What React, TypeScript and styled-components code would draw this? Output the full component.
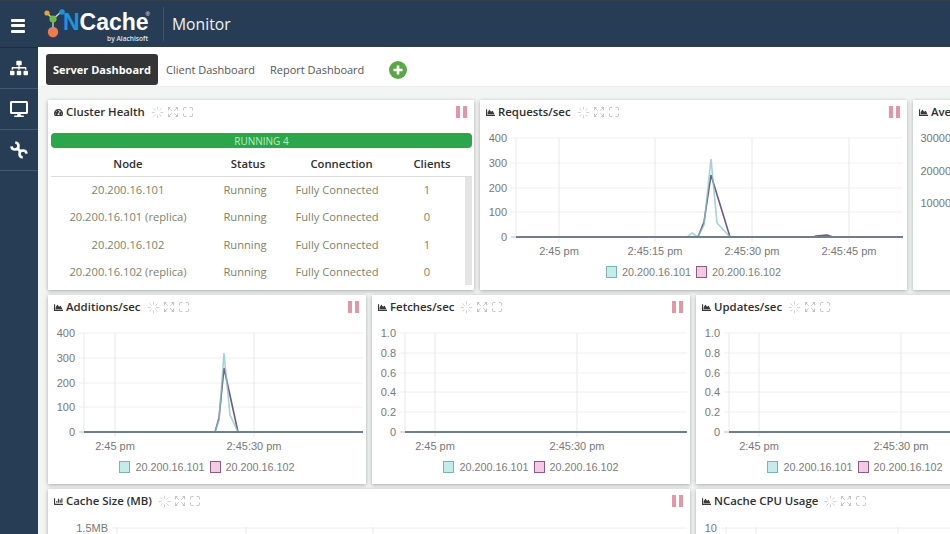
import type { ReactNode } from "react";
import styled, { createGlobalStyle } from "styled-components";
import { FaChartArea, FaChartBar, FaDesktop, FaSitemap, FaTachometerAlt } from "react-icons/fa";
import { Expand, Loader, Maximize } from "lucide-react";

const GlobalStyle = createGlobalStyle`
  html, body {
    margin: 0;
    height: 100%;
    overflow: hidden;
    background: #f3f4f4;
    font-family: "Open Sans", "Noto Sans", sans-serif;
  }
`;

const Page = styled.div`
  width: 950px;
  height: 534px;
  overflow: hidden;
  display: flex;
  flex-direction: column;
`;

const Header = styled.header`
  height: 47px;
  box-sizing: border-box;
  flex-shrink: 0;
  display: flex;
  align-items: center;
  background: #273d55;
  border-top: 1px solid #363d46;
  color: #fff;
`;

const Burger = styled.div`
  width: 38px;
  box-sizing: border-box;
  padding-right: 2px;
  display: flex;
  flex-direction: column;
  align-items: center;
  gap: 2.5px;
  margin-top: 3px;
`;

const BurgerBar = styled.span`
  width: 14px;
  height: 3px;
  border-radius: 1px;
  background: #fff;
`;

const LogoIcon = styled.svg`
  width: 24px;
  height: 34px;
  margin-left: 6px;
  margin-right: -7px;
  flex-shrink: 0;
`;

const LogoText = styled.div`
  display: flex;
  flex-direction: column;
  align-items: flex-end;
  width: 87px;
  margin-top: 5px;
`;

const LogoWord = styled.div`
  font-family: "Liberation Sans", Arial, sans-serif;
  font-size: 23px;
  line-height: 25px;
  font-weight: 700;
  white-space: nowrap;
  span {
    color: #1c95dc;
  }
  sup {
    font-size: 6px;
    line-height: 0;
    font-weight: 400;
    vertical-align: 14px;
    margin-left: -3px;
    margin-right: -2px;
  }
`;

const LogoBy = styled.div`
  font-size: 6.6px;
  line-height: 8px;
  font-weight: 600;
  color: #dfe6ec;
  white-space: nowrap;
`;

const HeaderDivider = styled.div`
  width: 1px;
  height: 34px;
  margin-left: 15px;
  background: #41566c;
`;

const AppTitle = styled.div`
  margin-left: 8px;
  font-size: 15.7px;
  color: #f0f3f5;
`;

const Body = styled.div`
  flex: 1;
  display: flex;
  min-height: 0;
`;

const Sidebar = styled.nav`
  width: 38px;
  flex-shrink: 0;
  background: #273d55;
  border-top: 1px solid #1c2e42;
`;

const SideItem = styled.div`
  height: 40px;
  display: flex;
  align-items: center;
  justify-content: center;
  color: #fff;
  border-bottom: 1px solid #45596e;
`;

const Main = styled.main`
  flex: 1;
  min-width: 0;
  overflow: hidden;
`;

const TabBar = styled.div`
  height: 40px;
  display: flex;
  align-items: center;
  gap: 1px;
  padding: 6px 0 0 8px;
  background: #fff;
  box-sizing: border-box;
  border-bottom: 1px solid #efefef;
`;

const Tab = styled.div<{ $active?: boolean }>`
  height: 31px;
  display: flex;
  align-items: center;
  padding: 0 7px;
  border-radius: 3px;
  font-size: 11px;
  font-weight: ${(p) => (p.$active ? 700 : 400)};
  color: ${(p) => (p.$active ? "#fff" : "#555")};
  background: ${(p) => (p.$active ? "#333537" : "transparent")};
  white-space: nowrap;
`;

const AddTab = styled.svg`
  width: 18px;
  height: 18px;
  margin-left: 17px;
`;

const Rows = styled.div`
  display: flex;
  flex-direction: column;
  gap: 5px;
  padding: 13px 0 0 10px;
`;

const Row = styled.div`
  display: flex;
  gap: 6px;
`;

const PanelBox = styled.section<{ $width: number; $height: number }>`
  width: ${(p) => p.$width}px;
  height: ${(p) => p.$height}px;
  flex-shrink: 0;
  background: #fff;
  box-shadow: 0 1px 4px rgba(0, 0, 0, 0.32);
`;

const PanelHead = styled.div`
  height: 24px;
  display: flex;
  align-items: center;
  padding: 0 7px 0 6px;
  color: #3a3a3a;
`;

const PanelTitle = styled.h3`
  margin: 0 6px 0 3px;
  font-size: 11.4px;
  line-height: 14px;
  font-weight: 600;
  color: #2e2e2e;
  white-space: nowrap;
`;

const Tools = styled.div`
  display: flex;
  align-items: center;
  gap: 3px;
  color: #a9a9a9;
`;

const Pause = styled.div`
  margin-left: auto;
  display: flex;
  gap: 3px;
  span {
    width: 4px;
    height: 12px;
    background: #e296a6;
  }
`;

const ChartSvg = styled.svg`
  display: block;
  margin-top: 6px;
  font-family: "Liberation Sans", Arial, sans-serif;
  font-size: 11px;
`;

const Legend = styled.div`
  height: 24px;
  display: flex;
  align-items: center;
  justify-content: center;
  gap: 5px;
  font-family: "Liberation Sans", Arial, sans-serif;
  font-size: 10.8px;
  color: #7b7b7b;
`;

const LegendItem = styled.div`
  display: flex;
  align-items: center;
  gap: 5px;
`;

const Swatch = styled.i<{ $pink?: boolean }>`
  width: 9px;
  height: 10px;
  border: 1px solid ${(p) => (p.$pink ? "#8c5a86" : "#78b4b6")};
  background: ${(p) => (p.$pink ? "#f6c8e4" : "#c4ecea")};
`;

const HealthBar = styled.div`
  margin: 9px 2px 0 3px;
  height: 15px;
  border-radius: 4px;
  display: flex;
  align-items: center;
  justify-content: center;
  background: #29a74a;
  color: #b8eec0;
  font-size: 10px;
`;

const NodeTable = styled.div`
  margin: 0 2px 0 3px;
`;

const NodeHead = styled.div`
  display: grid;
  grid-template-columns: 154px 86px 101px 1fr;
  height: 29px;
  box-sizing: border-box;
  padding-top: 2px;
  align-items: center;
  text-align: center;
  font-size: 11.3px;
  font-weight: 600;
  color: #2e2e2e;
  border-bottom: 1px solid #dcdcdc;
`;

const NodeBody = styled.div`
  display: flex;
  justify-content: space-between;
`;

const NodeRows = styled.div`
  flex: 1;
  margin-top: -1px;
`;

const NodeRow = styled.div`
  display: grid;
  grid-template-columns: 154px 80px 104px 1fr;
  height: 27.3px;
  align-items: center;
  text-align: center;
  font-size: 11.2px;
  color: #7c8468;
`;

const Scrollbar = styled.div`
  width: 7px;
  height: 108px;
  background: #e4e4e4;
`;

const PanelTools = () => (
  <Tools>
    <Loader size={13} strokeWidth={1.4} color="#c4c4c4" />
    <Expand size={12} strokeWidth={1.4} strokeDasharray="3 2" />
    <Maximize size={12} strokeWidth={1.4} />
  </Tools>
);

interface PanelProps {
  title: string;
  icon?: "area" | "bar" | "gauge";
  width: number;
  height: number;
  paused?: boolean;
  children?: ReactNode;
}

const Panel = ({ title, icon = "area", width, height, paused = true, children }: PanelProps) => {
  const Icon = icon === "bar" ? FaChartBar : icon === "gauge" ? FaTachometerAlt : FaChartArea;
  return (
    <PanelBox $width={width} $height={height}>
      <PanelHead>
        <Icon size={9} />
        <PanelTitle>{title}</PanelTitle>
        <PanelTools />
        {paused && (
          <Pause>
            <span />
            <span />
          </Pause>
        )}
      </PanelHead>
      {children}
    </PanelBox>
  );
};

interface ChartProps {
  width: number;
  height?: number;
  left: number;
  right: number;
  top?: number;
  bottom?: number;
  yTicks: [string, number][];
  xTicks: [string, number][];
  teal?: string;
  purple?: string;
  baseline?: boolean;
}

// coordinates here are local to the svg, read off the screenshot
const Chart = ({
  width,
  height = 130,
  left,
  right,
  top = 8,
  bottom = 107,
  yTicks,
  xTicks,
  teal,
  purple,
  baseline = true,
}: ChartProps) => (
  <ChartSvg width={width} height={height} viewBox={`0 0 ${width} ${height}`}>
    {yTicks.map(([label, y]) => (
      <g key={label}>
        <line x1={left - 5} x2={right} y1={y} y2={y} stroke={y === bottom ? "#bbb" : "#eeeeee"} />
        <text x={left - 9} y={y + 4} textAnchor="end" fill="#777">
          {label}
        </text>
      </g>
    ))}
    <line x1={left} x2={left} y1={top} y2={bottom} stroke="#e8e8e8" />
    {xTicks.map(([label, x]) => (
      <g key={x}>
        <line x1={x} x2={x} y1={top} y2={bottom + 5} stroke="#e8e8e8" />
        <text x={x} y={bottom + 18} textAnchor="middle" fill="#777">
          {label}
        </text>
      </g>
    ))}
    {purple && <polyline points={purple} fill="none" stroke="#6e5a82" strokeWidth="1.6" />}
    {teal && <polyline points={teal} fill="none" stroke="rgba(132,196,200,0.75)" strokeWidth="1.6" />}
    {baseline && <line x1={left} x2={right} y1={bottom} y2={bottom} stroke="#6f7d8e" strokeWidth="1.8" />}
  </ChartSvg>
);

const ChartLegend = () => (
  <Legend>
    <LegendItem>
      <Swatch />
      20.200.16.101
    </LegendItem>
    <LegendItem>
      <Swatch $pink />
      20.200.16.102
    </LegendItem>
  </Legend>
);

const nodes = [
  ["20.200.16.101", "1"],
  ["20.200.16.101 (replica)", "0"],
  ["20.200.16.102", "1"],
  ["20.200.16.102 (replica)", "0"],
];

const hundreds: [string, number][] = [
  ["400", 8],
  ["300", 33],
  ["200", 58],
  ["100", 82],
  ["0", 107],
];

const fractions: [string, number][] = [
  ["1.0", 8],
  ["0.8", 28],
  ["0.6", 48],
  ["0.4", 67],
  ["0.2", 87],
  ["0", 107],
];

const App = () => (
  <Page>
    <GlobalStyle />
    <Header>
      <Burger>
        <BurgerBar />
        <BurgerBar />
        <BurgerBar />
      </Burger>
      <LogoIcon viewBox="0 0 24 34">
        <path d="M3 6 L9 12 L17 5 M9 12 L9 24" stroke="#cfd8de" strokeWidth="1.3" fill="none" />
        <circle cx="3" cy="6" r="2.6" fill="#e8a33c" />
        <circle cx="18" cy="5" r="2.8" fill="#1c95dc" />
        <circle cx="9" cy="12" r="3.6" fill="#6cbb45" />
        <circle cx="9" cy="25" r="5.2" fill="#ee7a50" />
      </LogoIcon>
      <LogoText>
        <LogoWord>
          <span>N</span>Cache<sup>®</sup>
        </LogoWord>
        <LogoBy>by Alachisoft</LogoBy>
      </LogoText>
      <HeaderDivider />
      <AppTitle>Monitor</AppTitle>
    </Header>
    <Body>
      <Sidebar>
        <SideItem>
          <FaSitemap size={18} />
        </SideItem>
        <SideItem>
          <FaDesktop size={18} />
        </SideItem>
        <SideItem>
          <svg width="20" height="20" viewBox="0 0 20 20" fill="none" stroke="#fff" strokeWidth="2.6">
            <path d="M6.3 2.5 A3.5 3.5 0 1 1 2.5 6.3" />
            <path d="M13.7 17.5 A3.5 3.5 0 1 1 17.5 13.7" />
            <path d="M8 8 L12 12" strokeWidth="3" />
          </svg>
        </SideItem>
      </Sidebar>
      <Main>
        <TabBar>
          <Tab $active>Server Dashboard</Tab>
          <Tab>Client Dashboard</Tab>
          <Tab>Report Dashboard</Tab>
          <AddTab viewBox="0 0 18 18">
            <circle cx="9" cy="9" r="9" fill="#5aa845" />
            <path d="M9 4.5 V13.5 M4.5 9 H13.5" stroke="#fff" strokeWidth="2.6" />
          </AddTab>
        </TabBar>
        <Rows>
          <Row>
            <Panel title="Cluster Health" icon="gauge" width={426} height={190}>
              <HealthBar>RUNNING 4</HealthBar>
              <NodeTable>
                <NodeHead>
                  <div>Node</div>
                  <div>Status</div>
                  <div>Connection</div>
                  <div>Clients</div>
                </NodeHead>
                <NodeBody>
                  <NodeRows>
                    {nodes.map(([name, clients]) => (
                      <NodeRow key={name}>
                        <div>{name}</div>
                        <div>Running</div>
                        <div>Fully Connected</div>
                        <div>{clients}</div>
                      </NodeRow>
                    ))}
                  </NodeRows>
                  <Scrollbar />
                </NodeBody>
              </NodeTable>
            </Panel>
            <Panel title="Requests/sec" width={427} height={190}>
              <Chart
                width={427}
                left={36}
                right={423}
                yTicks={hundreds}
                xTicks={[
                  ["2:45 pm", 79],
                  ["2:45:15 pm", 175],
                  ["2:45:30 pm", 272],
                  ["2:45:45 pm", 369],
                ]}
                teal="207,107 212,103 218,107 224,95 231,29 237,93 250,107"
                purple="218,107 224,92 231,45 250,107 333,107 336,106 347,105 353,107"
              />
              <ChartLegend />
            </Panel>
            <Panel title="Average Latency" width={318} height={190} paused={false}>
              <Chart
                width={318}
                left={47}
                right={318}
                yTicks={[
                  ["30000", 8],
                  ["20000", 41],
                  ["10000", 73],
                ]}
                xTicks={[]}
                baseline={false}
              />
            </Panel>
          </Row>
          <Row>
            <Panel title="Additions/sec" width={318} height={189}>
              <Chart
                width={318}
                left={36}
                right={315}
                yTicks={hundreds}
                xTicks={[
                  ["2:45 pm", 67],
                  ["2:45:30 pm", 206],
                ]}
                teal="167,107 171,95 176,28 182,90 190,107"
                purple="167,107 171,93 176,43 190,107"
              />
              <ChartLegend />
            </Panel>
            <Panel title="Fetches/sec" width={318} height={189}>
              <Chart
                width={318}
                left={33}
                right={315}
                yTicks={fractions}
                xTicks={[
                  ["2:45 pm", 63],
                  ["2:45:30 pm", 205],
                ]}
              />
              <ChartLegend />
            </Panel>
            <Panel title="Updates/sec" width={318} height={189}>
              <Chart
                width={318}
                left={33}
                right={315}
                yTicks={fractions}
                xTicks={[
                  ["2:45 pm", 63],
                  ["2:45:30 pm", 205],
                ]}
              />
              <ChartLegend />
            </Panel>
          </Row>
          <Row>
            <Panel title="Cache Size (MB)" icon="bar" width={642} height={189}>
              <Chart
                width={642}
                left={69}
                right={638}
                bottom={120}
                yTicks={[["1.5MB", 9]]}
                xTicks={[
                  ["", 198],
                  ["", 325],
                ]}
                baseline={false}
              />
            </Panel>
            <Panel title="NCache CPU Usage" width={318} height={189}>
              <Chart
                width={318}
                left={30}
                right={315}
                bottom={120}
                yTicks={[["10", 9]]}
                xTicks={[
                  ["", 60],
                  ["", 202],
                ]}
                baseline={false}
              />
            </Panel>
          </Row>
        </Rows>
      </Main>
    </Body>
  </Page>
);

export default App;
